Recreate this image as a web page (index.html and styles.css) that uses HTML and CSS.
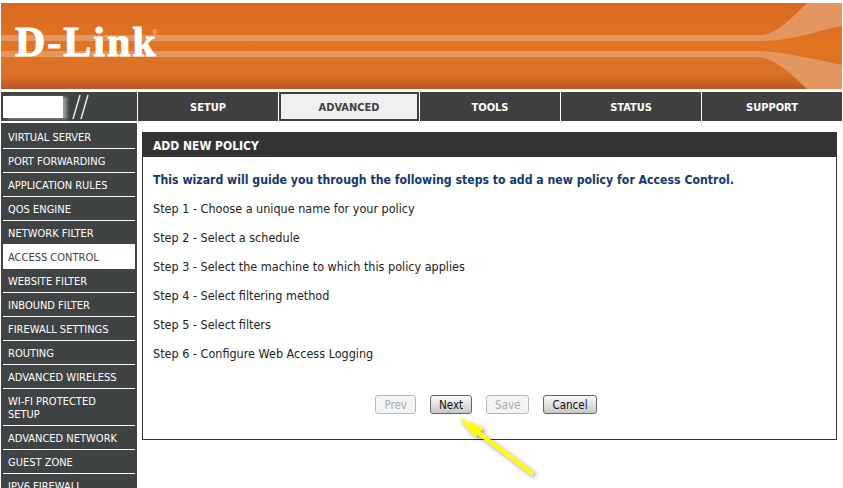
FILE: index.html
```html
<!DOCTYPE html>
<html lang="en-us">
  <head>
    <meta charset="utf-8">
    <title>D-Link Advanced</title>
    <link rel="stylesheet" href="styles.css">
  </head>
  <body>
    <section id=banner>
      <svg class="banner-art" width="841" height="86" viewBox="0 0 841 86">
        <defs>
          <linearGradient id="orange" x1="0" y1="0" x2="0" y2="1">
            <stop offset="0" stop-color="#d9681f"/>
            <stop offset="0.5" stop-color="#e17522"/>
            <stop offset="0.85" stop-color="#d86f24"/>
            <stop offset="1" stop-color="#b9562a"/>
          </linearGradient>
        </defs>
        <rect width="841" height="86" fill="url(#orange)"/>
        <path d="M0 32H758C772 32 782 24 806 0H841V23C815 28 790 38 762 38H0Z" fill="#e39660"/>
        <path d="M0 48H756C780 48 810 56 841 62V86H806C790 70 772 54 756 54H0Z" fill="#e39660"/>
      </svg>
      <a class="logo" href="#">D-Link</a>
      <span class="logo-mark">®</span>
    </section>

    <section id=nav>
      <div class="model">
        <div class="model-box"></div>
        <svg class="model-slashes" width="20" height="26" viewBox="0 0 20 26">
          <path d="M2 25L9 1M10 25L17 1" stroke="#e8e8e8" stroke-width="1.5" fill="none"/>
        </svg>
      </div>
      <ul class="tabs">
        <li><a href="#">SETUP</a></li>
        <li class="active"><a href="#">ADVANCED</a></li>
        <li><a href="#">TOOLS</a></li>
        <li><a href="#">STATUS</a></li>
        <li><a href="#">SUPPORT</a></li>
      </ul>
    </section>

    <section id=main>
      <ul class="sidebar">
        <li><a href="#">VIRTUAL SERVER</a></li>
        <li><a href="#">PORT FORWARDING</a></li>
        <li><a href="#">APPLICATION RULES</a></li>
        <li><a href="#">QOS ENGINE</a></li>
        <li><a href="#">NETWORK FILTER</a></li>
        <li class="active"><a href="#">ACCESS CONTROL</a></li>
        <li><a href="#">WEBSITE FILTER</a></li>
        <li><a href="#">INBOUND FILTER</a></li>
        <li><a href="#">FIREWALL SETTINGS</a></li>
        <li><a href="#">ROUTING</a></li>
        <li><a href="#">ADVANCED WIRELESS</a></li>
        <li><a href="#">WI-FI PROTECTED SETUP</a></li>
        <li><a href="#">ADVANCED NETWORK</a></li>
        <li><a href="#">GUEST ZONE</a></li>
        <li><a href="#">IPV6 FIREWALL</a></li>
      </ul>

      <div class="box">
        <h1>ADD NEW POLICY</h1>
        <div class="box-body">
          <h2>This wizard will guide you through the following steps to add a new policy for Access Control.</h2>
          <p>Step 1 - Choose a unique name for your policy</p>
          <p>Step 2 - Select a schedule</p>
          <p>Step 3 - Select the machine to which this policy applies</p>
          <p>Step 4 - Select filtering method</p>
          <p>Step 5 - Select filters</p>
          <p>Step 6 - Configure Web Access Logging</p>
          <div class="buttons">
            <button class="btn" disabled>Prev</button>
            <button class="btn">Next</button>
            <button class="btn" disabled>Save</button>
            <button class="btn">Cancel</button>
          </div>
        </div>
      </div>
    </section>

    <svg class="arrow" width="100" height="80" viewBox="0 0 100 80">
      <defs>
        <filter id="shadow" x="-20%" y="-20%" width="150%" height="150%">
          <feDropShadow dx="2" dy="2" stdDeviation="2" flood-color="#000" flood-opacity="0.45"/>
        </filter>
      </defs>
      <path d="M9 8L34 18L30 21.5L84 62L82 65.5L26.5 24L26 28Z" fill="#ffff00" filter="url(#shadow)"/>
    </svg>
  </body>
</html>
```

FILE: styles.css
```css
* {
  box-sizing: border-box;
  margin: 0;
  padding: 0;
}

html, body {
  height: 488px;
  overflow: hidden;
}

body {
  position: relative;
  background: #fff;
  padding: 3px 1px 0 1px;
  font-family: "DejaVu Sans Condensed", "DejaVu Sans", sans-serif;
  font-size: 12px;
  color: #222;
}

ul {
  list-style: none;
}

a {
  text-decoration: none;
  color: inherit;
}

#banner {
  position: relative;
  height: 86px;
}

.banner-art {
  display: block;
}

.logo {
  position: absolute;
  left: 14px;
  top: 16px;
  color: #fff;
  font-family: "Liberation Serif", serif;
  font-weight: bold;
  font-size: 42px;
  line-height: 46px;
  letter-spacing: 2px;
  -webkit-text-stroke: 1px #fff;
}

.logo-mark {
  position: absolute;
  left: 151px;
  top: 26px;
  color: #f3c9a8;
  font-family: "Liberation Sans", sans-serif;
  font-size: 8px;
  line-height: 8px;
}

#nav {
  display: flex;
  gap: 1px;
  height: 29px;
  margin-top: 3px;
}

.model {
  display: flex;
  align-items: center;
  width: 136px;
  background: #404343;
  padding-left: 2px;
}

.model-box {
  width: 60px;
  height: 22px;
  background: #fff;
  box-shadow: 4px 1px 3px #999;
}

.model-slashes {
  margin-left: 8px;
}

.tabs {
  flex: 1;
  display: flex;
  gap: 1px;
}

.tabs li {
  flex: 1;
  display: flex;
  align-items: center;
  justify-content: center;
  padding-top: 1px;
  background: #404040;
  color: #fff;
  font-weight: bold;
  font-size: 11px;
}

.tabs li.active {
  background: #f0f0f0;
  box-shadow: inset 0 0 0 2px #404040;
  color: #404040;
}

#main {
  display: flex;
  align-items: flex-start;
  margin-top: 2px;
}

.sidebar {
  width: 136px;
  flex: none;
  background: #404343;
  padding: 2px 2px 0 2px;
}

.sidebar li {
  border-bottom: 1px solid #fff;
  color: #fff;
  font-size: 11px;
  line-height: 13px;
  padding: 6px 12px 4px 5px;
}

.sidebar li:last-child {
  border-bottom: 0;
}

.sidebar li.active {
  background: #fff;
  color: #404040;
}

.box {
  flex: 1;
  margin: 9px 5px 0 5px;
  border: 1px solid #333;
  height: 308px;
}

.box h1 {
  background: #333;
  color: #fff;
  font-size: 12px;
  line-height: 22px;
  padding: 2px 0 0 10px;
}

.box-body {
  padding: 0 10px;
}

.box h2 {
  color: #13386b;
  font-size: 12.2px;
  line-height: 15px;
  margin: 16px 0 13px 0;
  white-space: nowrap;
}

.box p {
  font-size: 12.5px;
  line-height: 15px;
  margin-bottom: 14px;
}

.buttons {
  display: flex;
  justify-content: center;
  gap: 14px;
  margin: 34px 7px 0 0;
}

.btn {
  height: 19px;
  padding: 0 8px;
  border: 1px solid #666;
  border-radius: 3px;
  background: linear-gradient(#fafafa, #c8c8c8);
  font-family: "DejaVu Sans Condensed", "DejaVu Sans", sans-serif;
  font-size: 11.5px;
  color: #111;
}

.btn:disabled {
  border-color: #bbb;
  background: #f4f4f4;
  color: #aaa;
}

.arrow {
  position: absolute;
  left: 450px;
  top: 410px;
}
```
